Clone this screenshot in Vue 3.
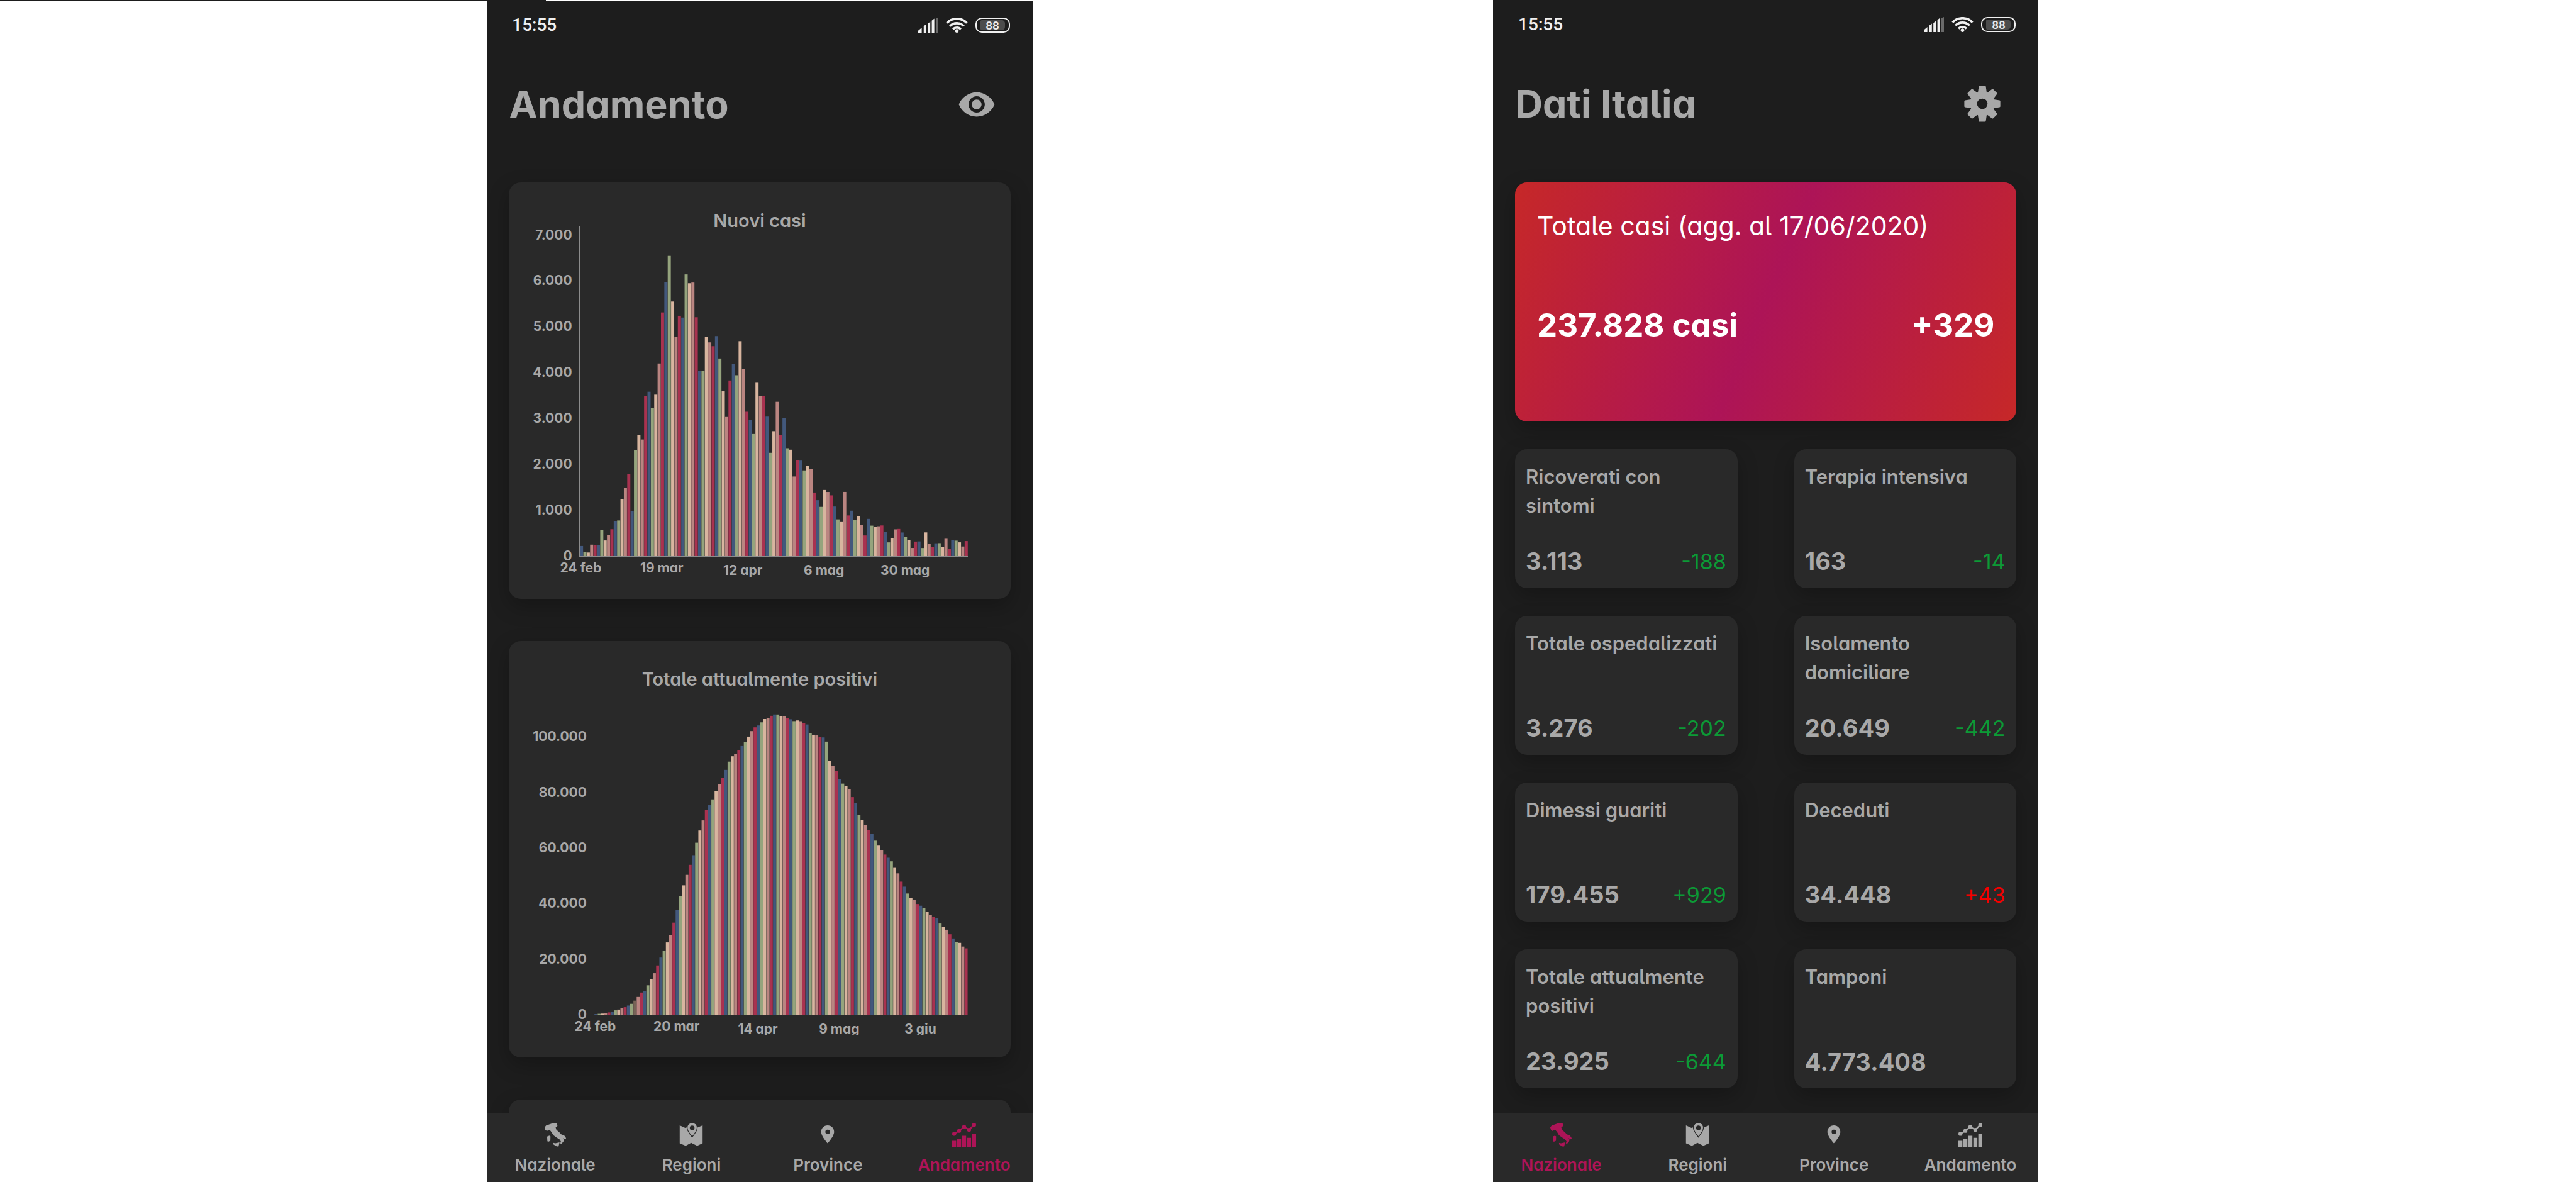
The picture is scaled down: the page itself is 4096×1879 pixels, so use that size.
<script setup>
const barColours = ['#42587c', '#95a47d', '#d8b59f', '#ba8581', '#a93250']

const newCases = [
  221, 93, 78, 250, 238, 240,
  566, 342, 466, 587, 769, 778, 1247, 1492, 1797, 977, 2313, 2651, 2547, 3497, 3590, 3233, 3526, 4207, 5322, 5986,
  6557, 5560, 4789, 5249, 5210, 6153, 5959, 5974, 5217, 4050, 4053,
  4782, 4668, 4585, 4805, 4316, 3599, 3039, 3836, 4204, 3951, 4694, 4092, 3153, 2972, 2667, 3786, 3493, 3491, 3047,
  2256, 2729, 3370, 2646, 3021, 2357, 2324, 1739, 2091, 2086, 1872,
  1965, 1900, 1389, 1221, 1075, 1444, 1401, 1327, 1083, 802, 744, 1402, 888, 992, 789, 875, 675, 451, 813, 665, 642,
  652, 669, 531, 300, 397, 584, 593, 516, 416, 355,
  178, 318, 321, 177, 518, 270, 197, 280, 283, 202, 379, 163, 346, 338, 301, 210, 329,
]

const activeCases = [
  221, 311, 385, 588, 821, 1049,
  1577, 1835, 2263, 2706, 3296, 3916, 5061, 6387, 7985, 8514, 10590, 12839, 14955, 17750, 20603, 23073, 26062, 28710,
  33190, 37860, 42681, 46638, 50418, 54030, 57521, 62013, 66414, 70065, 73880, 75528, 77635,
  80572, 83049, 85388, 88274, 91246, 93187, 94067, 95262, 96877, 98273, 100269, 102253, 103616, 104291, 105418,
  106607, 106962, 107771, 108257, 108237, 107709, 107699, 106848, 106527, 105847, 106103, 105813, 105205, 104657,
  101551,
  100943, 100704, 100179, 99980, 98467, 91528, 89624, 87961, 84842, 83324, 82488, 81266, 78457, 76440, 72070, 70187,
  68351, 66553, 65129, 62752, 60960, 59322, 57752, 56594, 55300, 52942, 50966, 47986, 46175, 43691, 42075,
  41367, 39893, 39297, 38429, 36976, 35877, 35262, 34730, 32872, 31710, 30637, 28997, 27485, 26274, 25909, 24569,
  23925,
]

function makeChart(title, values, step, ticks, every, days, dimmed) {
  const top = Math.max(...values) * 1.1
  const count = values.length
  return {
    title,
    count,
    ticks,
    days,
    stepHeight: (step / top) * 100 + '%',
    dayWidth: (every / count) * 100 + '%',
    dayShift: (-(every - 1) / 2 / count) * 100 + '%',
    bars: values.map((value, i) => ({
      x: i * 100 + 4,
      y: 1000 - (value / top) * 1000,
      h: (value / top) * 1000,
      fill: i === dimmed ? '#776457' : barColours[i % barColours.length],
    })),
  }
}

const charts = [
  makeChart('Nuovi casi', newCases, 1000,
    ['0', '1.000', '2.000', '3.000', '4.000', '5.000', '6.000', '7.000'],
    24, ['24 feb', '19 mar', '12 apr', '6 mag', '30 mag'], -1),
  makeChart('Totale attualmente positivi', activeCases, 20000,
    ['0', '20.000', '40.000', '60.000', '80.000', '100.000'],
    25, ['24 feb', '20 mar', '14 apr', '9 mag', '3 giu'], 12),
]

const stats = [
  { label: 'Ricoverati con sintomi', value: '3.113', delta: '-188', tone: 'good' },
  { label: 'Terapia intensiva', value: '163', delta: '-14', tone: 'good' },
  { label: 'Totale ospedalizzati', value: '3.276', delta: '-202', tone: 'good' },
  { label: 'Isolamento domiciliare', value: '20.649', delta: '-442', tone: 'good' },
  { label: 'Dimessi guariti', value: '179.455', delta: '+929', tone: 'good' },
  { label: 'Deceduti', value: '34.448', delta: '+43', tone: 'bad' },
  { label: 'Totale attualmente positivi', value: '23.925', delta: '-644', tone: 'good' },
  { label: 'Tamponi', value: '4.773.408', delta: '', tone: '' },
]

const tabs = [
  { id: 'nazionale', label: 'Nazionale' },
  { id: 'regioni', label: 'Regioni' },
  { id: 'province', label: 'Province' },
  { id: 'andamento', label: 'Andamento' },
]

const screens = [
  { id: 'trend', title: 'Andamento', action: 'Mostra grafici', active: 'andamento' },
  { id: 'national', title: 'Dati Italia', action: 'Impostazioni', active: 'nazionale' },
]

const gearTeeth = [0, 45, 90, 135, 180, 225, 270, 315]
</script>

<template>
  <div class="page">
    <div class="edge"></div>
    <section v-for="screen in screens" :key="screen.id" class="phone" :class="screen.id">
      <div class="status">
        <span class="clock">15:55</span>
        <span class="status-icons">
          <svg class="signal" viewBox="0 0 40 30" aria-hidden="true">
            <path fill="#f0f0f0" d="M0 30v-4l7-6v10zM11 30V17l5-4v17zM19 30V12l5-4v22zM27 30V6l5-4v28z" />
            <path fill="#6a6a6a" d="M35 30V2l5-2v30z" />
          </svg>
          <svg class="wifi" viewBox="0 0 44 30" aria-hidden="true">
            <g fill="none" stroke="#f0f0f0" stroke-width="4.500">
              <path d="M2 10.500a28 28 0 0 1 40 0" />
              <path d="M8 17a19.500 19.500 0 0 1 28 0" />
              <path d="M14 23a11.500 11.500 0 0 1 16 0" />
            </g>
            <circle cx="22" cy="26.500" r="3.500" fill="#f0f0f0" />
          </svg>
          <span class="battery"><span class="charge">88</span></span>
        </span>
      </div>

      <header class="head">
        <h1>{{ screen.title }}</h1>
        <button type="button" class="action" :aria-label="screen.action">
          <svg v-if="screen.id === 'trend'" viewBox="0 0 24 24" aria-hidden="true">
            <path fill="currentColor" d="M12 4.500C7 4.500 2.730 7.610 1 12c1.730 4.390 6 7.500 11 7.500s9.270-3.110 11-7.500c-1.730-4.390-6-7.500-11-7.500zM12 17c-2.760 0-5-2.240-5-5s2.240-5 5-5 5 2.240 5 5-2.240 5-5 5zm0-8c-1.660 0-3 1.340-3 3s1.340 3 3 3 3-1.340 3-3-1.340-3-3-3z" />
          </svg>
          <svg v-else viewBox="-39 -39 78 78" aria-hidden="true">
            <g fill="currentColor">
              <path v-for="a in gearTeeth" :key="a" :transform="`rotate(${a})`" d="M-9 -21L-7 -34.500Q-6.500 -36 -5 -36H5Q6.500 -36 7 -34.500L9 -21Z" />
            </g>
            <circle r="17.500" fill="none" stroke="currentColor" stroke-width="14" />
          </svg>
        </button>
      </header>

      <main v-if="screen.id === 'trend'" class="body charts">
        <article v-for="chart in charts" :key="chart.title" class="card chart">
          <h2>{{ chart.title }}</h2>
          <div class="figure">
            <ul class="ticks">
              <li v-for="tick in chart.ticks" :key="tick" :style="{ height: chart.stepHeight }"><span>{{ tick }}</span></li>
            </ul>
            <svg class="plot" :viewBox="`0 0 ${chart.count * 100} 1000`" preserveAspectRatio="none" role="img" :aria-label="chart.title">
              <rect v-for="(bar, i) in chart.bars" :key="i" :x="bar.x" :y="bar.y" width="92" :height="bar.h" :fill="bar.fill" />
            </svg>
            <ul class="days">
              <li v-for="(day, i) in chart.days" :key="day" :class="'d' + i" :style="{ width: chart.dayWidth, left: chart.dayShift }">{{ day }}</li>
            </ul>
          </div>
        </article>
        <article class="card chart"></article>
      </main>

      <main v-else class="body">
        <article class="card total">
          <h2>Totale casi (agg. al 17/06/2020)</h2>
          <p><span>237.828 casi</span><span>+329</span></p>
        </article>
        <div class="stats">
          <article v-for="stat in stats" :key="stat.label" class="card stat">
            <h3>{{ stat.label }}</h3>
            <p><b>{{ stat.value }}</b><span :class="stat.tone">{{ stat.delta }}</span></p>
          </article>
        </div>
      </main>

      <nav class="tabs">
        <a v-for="tab in tabs" :key="tab.id" :href="'#' + tab.id" :class="{ active: tab.id === screen.active }">
          <svg v-if="tab.id === 'nazionale'" viewBox="0 0 48 48" aria-hidden="true">
            <path fill="currentColor" d="M2.500 9L5.300 5.300L10.800 3.500L17.800 1L23.400 0L27.500 0.700L28.200 6.300L24.700 9L26.100 14L31.700 18.700L35.900 23L42.100 25.700L45.600 30.700L44.200 33L39.300 30.700L41.400 34L40 38L36.600 41.700L33.800 41.300L35.200 37.300L32.400 33L26.800 29.700L19.900 24.700L16.400 18.700L13.600 15.300L10.200 14L7.400 16.300L3.900 14Z" />
            <path fill="currentColor" d="M7.500 27.500L12 25.700L14.300 27L14 36L10 38L8 37ZM20 40L24 41L32.500 39.300L30.500 47.500L27 47.500L20.500 43.500Z" />
          </svg>
          <svg v-else-if="tab.id === 'regioni'" viewBox="0 0 48 48" aria-hidden="true">
            <path fill="currentColor" d="M1 5L12 10L15 9Q16 16 26 30Q35 16 37 9L47 5V41L36 46L24 40L13 46L1 41Z" />
            <path fill="currentColor" stroke="#292929" stroke-width="1.500" fill-rule="evenodd" d="M26 0C20 0 16 4 16 10C16 16 21 22 26 28C31 22 36 16 36 10C36 4 32 0 26 0ZM26 6A4 4 0 1 1 26 14A4 4 0 1 1 26 6Z" />
          </svg>
          <svg v-else-if="tab.id === 'province'" viewBox="0 0 48 48" aria-hidden="true">
            <path fill="currentColor" fill-rule="evenodd" d="M24 5C16.500 5 11 10.500 11 18C11 27 24 41 24 41S37 27 37 18C37 10.500 31.500 5 24 5ZM24 13.500A4.600 4.600 0 1 1 24 22.700A4.600 4.600 0 1 1 24 13.500Z" />
          </svg>
          <svg v-else viewBox="0 0 48 48" aria-hidden="true">
            <path fill="currentColor" d="M0 36h8v12H0zM10 32h8v16h-8zM20 26h8v22h-8zM30 30h8v18h-8zM40 22h8v26h-8z" />
            <path fill="none" stroke="currentColor" stroke-width="3" d="M4 22L14 16L24 8L34 14L44 4" />
            <g fill="currentColor">
              <circle cx="4" cy="22" r="4" /><circle cx="14" cy="16" r="4" /><circle cx="24" cy="8" r="4" />
              <circle cx="34" cy="14" r="4" /><circle cx="44" cy="4" r="4" />
            </g>
          </svg>
          <span>{{ tab.label }}</span>
        </a>
      </nav>
    </section>
  </div>
</template>

<style>
body {
  margin: 0;
  background: #fff;
}
</style>

<style scoped>
.page {
  display: grid;
  grid-template-columns: 964fr 1080fr 912fr 1080fr 1064fr;
  height: 100vh;
  position: relative;
  font-family: Inter, "Noto Sans", sans-serif;
  font-feature-settings: "cv11", "cv05";
  font-weight: 600;
  color: #a8a8a8;
}

.edge {
  position: absolute;
  top: 0;
  left: 0;
  width: 21.18%;
  height: 1px;
  background: #1d1d1d;
}

.phone {
  display: flex;
  flex-direction: column;
  min-width: 0;
  min-height: 0;
  box-sizing: border-box;
  overflow: hidden;
  background: #1d1d1d;
}

.trend {
  grid-column: 2;
  margin-top: 1px;
}

.national {
  grid-column: 4;
}

h1,
h2,
h3,
p,
ul {
  margin: 0;
  padding: 0;
  list-style: none;
  font-weight: inherit;
}

.status {
  display: flex;
  flex: none;
  align-items: center;
  justify-content: space-between;
  height: 78px;
  padding: 0 36px 0 40px;
  font-family: Roboto, sans-serif;
  font-weight: 500;
  color: #f0f0f0;
}

.clock {
  font-size: 28px;
  line-height: 32px;
}

.status-icons {
  display: flex;
  align-items: center;
  gap: 12px;
}

.signal {
  width: 32px;
  height: 24px;
}

.wifi {
  width: 35px;
  height: 24px;
}

.battery {
  box-sizing: border-box;
  width: 55px;
  height: 24px;
  padding: 2px 6px;
  border: 2px solid #f0f0f0;
  border-radius: 10px;
}

.charge {
  display: block;
  height: 16px;
  border-radius: 2px 5px 5px 2px;
  background: #4c4c4c;
  font-size: 19px;
  line-height: 17px;
  text-align: center;
}

.head {
  display: flex;
  flex: none;
  align-items: center;
  justify-content: space-between;
  height: 174px;
  padding: 0 58px 0 35px;
}

h1 {
  font-size: 61px;
  font-weight: 700;
  line-height: 72px;
}

.action {
  width: 62px;
  height: 62px;
  padding: 0;
  border: 0;
  background: none;
  color: inherit;
}

.action svg {
  display: block;
  width: 62px;
  height: 62px;
}

.body {
  flex: 1;
  min-height: 0;
  padding: 38px 35px 0;
  overflow: hidden;
}

.card {
  box-sizing: border-box;
  border-radius: 19px;
  background: #292929;
  box-shadow: 0 12px 32px rgba(0, 0, 0, 0.25);
}

.charts {
  display: flex;
  flex-direction: column;
  gap: 67px;
  padding-top: 37px;
}

.chart {
  flex: none;
  min-height: 662px;
  padding: 43px 68px 35px 38px;
}

.chart h2 {
  margin-right: -30px;
  font-size: 29px;
  line-height: 36px;
  text-align: center;
}

.figure {
  display: grid;
  grid-template-columns: auto 1fr;
  grid-template-rows: 526px 32px;
  column-gap: 11px;
  margin-top: -10px;
  font-size: 21px;
  font-weight: 700;
  line-height: 24px;
}

.ticks {
  display: flex;
  flex-direction: column-reverse;
  height: 526px;
}

.ticks li {
  display: flex;
  flex: none;
  align-items: flex-end;
  justify-content: flex-end;
}

.ticks span {
  margin-bottom: -11px;
}

.plot {
  display: block;
  box-sizing: border-box;
  width: 100%;
  height: 526px;
  border-bottom: 1px solid #8c8c8c;
  border-left: 1px solid #8c8c8c;
}

.days {
  display: flex;
  grid-column: 2;
  clip-path: inset(0 -60px 0 -60px);
}

.days li {
  position: relative;
  flex: none;
  padding-top: 10px;
  text-align: center;
  white-space: nowrap;
}

.days .d0,
.days .d1 {
  padding-top: 6px;
}

.total {
  display: flex;
  flex-direction: column;
  height: 380px;
  padding: 45px 35px;
  background: linear-gradient(113deg, #c62828, #ad1457 50%, #c62828);
  color: #fff;
}

.total h2 {
  font-size: 41px;
  font-weight: 400;
  line-height: 48px;
}

.total p {
  display: flex;
  justify-content: space-between;
  margin-top: 104px;
  font-size: 51px;
  font-weight: 700;
  line-height: 60px;
}

.stats {
  display: grid;
  grid-template-columns: 1fr 1fr;
  gap: 44px 90px;
  margin-top: 44px;
}

.stat {
  display: flex;
  flex-direction: column;
  justify-content: space-between;
  height: 221px;
  padding: 21px 18px 19px 17px;
}

.stat h3 {
  font-size: 31px;
  line-height: 46px;
}

.stat p {
  display: flex;
  align-items: center;
  justify-content: space-between;
  line-height: 46px;
}

.stat b {
  font-size: 38px;
  font-weight: 700;
}

.stat span {
  padding-top: 3px;
  font-size: 34px;
  font-weight: 400;
}

.good {
  color: #0c9a36;
}

.bad {
  color: #f60000;
}

.tabs {
  display: grid;
  flex: none;
  grid-template-columns: repeat(4, 1fr);
  height: 110px;
  background: #292929;
}

.tabs a {
  display: flex;
  flex-direction: column;
  align-items: center;
  padding-top: 16px;
  color: inherit;
  font-size: 26px;
  line-height: 30px;
  text-decoration: none;
}

.tabs svg {
  width: 38px;
  height: 38px;
  margin-bottom: 14px;
}

.tabs .active {
  color: #ad1457;
}
</style>
